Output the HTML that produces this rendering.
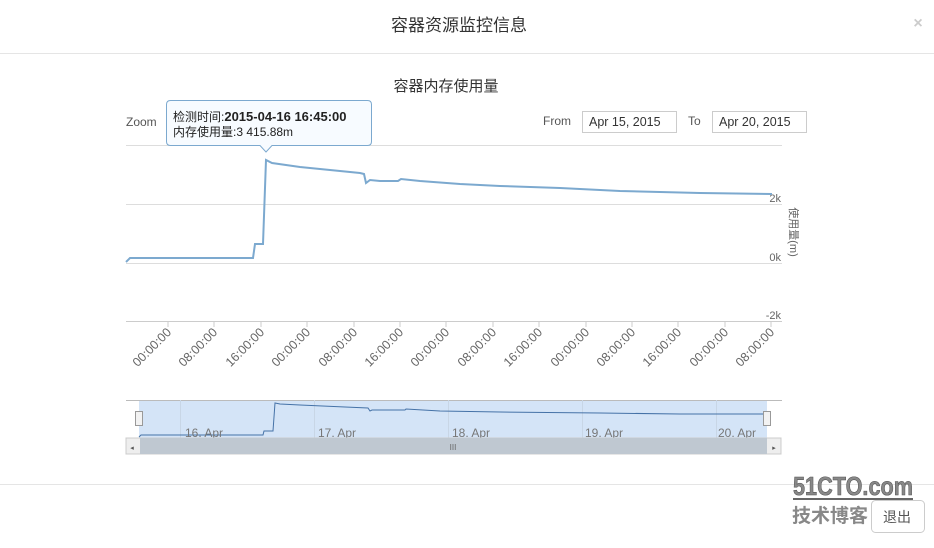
<!DOCTYPE html>
<html><head><meta charset="utf-8"><style>
body{margin:0;width:934px;height:543px;background:#fff;overflow:hidden;font-family:"Liberation Sans","Noto Sans CJK SC",sans-serif;}
svg text{font-family:"Liberation Sans","Noto Sans CJK SC",sans-serif;}
</style></head><body>
<svg width="934" height="543" viewBox="0 0 934 543" xmlns="http://www.w3.org/2000/svg">
<text x="459" y="31" font-size="17" text-anchor="middle" fill="#333">容器资源监控信息</text>
<text x="918" y="28" font-size="16" text-anchor="middle" fill="#ccc" font-weight="bold">×</text>
<line x1="0" y1="53.5" x2="934" y2="53.5" stroke="#e5e5e5"/>
<line x1="0" y1="484.5" x2="934" y2="484.5" stroke="#e5e5e5"/>
<text x="446" y="91" font-size="15" text-anchor="middle" fill="#333">容器内存使用量</text>
<text x="126" y="126" font-size="12" fill="#555">Zoom</text>
<text x="543" y="125" font-size="12" fill="#555">From</text>
<rect x="582.5" y="111.5" width="94" height="21" fill="#fff" stroke="#ccc"/>
<text x="589" y="126" font-size="12.5" fill="#333">Apr 15, 2015</text>
<text x="688" y="125" font-size="12" fill="#555">To</text>
<rect x="712.5" y="111.5" width="94" height="21" fill="#fff" stroke="#ccc"/>
<text x="719" y="126" font-size="12.5" fill="#333">Apr 20, 2015</text>
<g stroke="#ddd"><line x1="126" y1="145.5" x2="782" y2="145.5"/><line x1="126" y1="204.5" x2="782" y2="204.5"/><line x1="126" y1="263.5" x2="782" y2="263.5"/></g>
<line x1="126" y1="321.5" x2="782" y2="321.5" stroke="#ccc"/>
<g font-size="11" fill="#666" text-anchor="end"><text x="781" y="202">2k</text><text x="781" y="261">0k</text><text x="781" y="319">-2k</text></g>
<text transform="translate(790,232) rotate(90)" font-size="11" fill="#666" text-anchor="middle">使用量(m)</text>
<polyline fill="none" stroke="#7ca9cf" stroke-width="2" points="126,262 130,258 253,258 255,244 263,244 266,160 272,163 300,167 330,170 360,173 364,174 366,183 370,180 380,181 398,181 401,179 420,181 460,184 500,186 560,188 620,191 700,193 772,194"/>
<g stroke="#ccc">
<line x1="168" y1="322" x2="168" y2="327"/><line x1="214" y1="322" x2="214" y2="327"/><line x1="261" y1="322" x2="261" y2="327"/><line x1="307" y1="322" x2="307" y2="327"/><line x1="354" y1="322" x2="354" y2="327"/><line x1="400" y1="322" x2="400" y2="327"/><line x1="446" y1="322" x2="446" y2="327"/><line x1="493" y1="322" x2="493" y2="327"/><line x1="539" y1="322" x2="539" y2="327"/><line x1="586" y1="322" x2="586" y2="327"/><line x1="632" y1="322" x2="632" y2="327"/><line x1="678" y1="322" x2="678" y2="327"/><line x1="725" y1="322" x2="725" y2="327"/><line x1="771" y1="322" x2="771" y2="327"/>
</g>
<g font-size="12.5" fill="#666" text-anchor="end">
<text transform="translate(172,333) rotate(-45)">00:00:00</text>
<text transform="translate(218,333) rotate(-45)">08:00:00</text>
<text transform="translate(265,333) rotate(-45)">16:00:00</text>
<text transform="translate(311,333) rotate(-45)">00:00:00</text>
<text transform="translate(358,333) rotate(-45)">08:00:00</text>
<text transform="translate(404,333) rotate(-45)">16:00:00</text>
<text transform="translate(450,333) rotate(-45)">00:00:00</text>
<text transform="translate(497,333) rotate(-45)">08:00:00</text>
<text transform="translate(543,333) rotate(-45)">16:00:00</text>
<text transform="translate(590,333) rotate(-45)">00:00:00</text>
<text transform="translate(636,333) rotate(-45)">08:00:00</text>
<text transform="translate(682,333) rotate(-45)">16:00:00</text>
<text transform="translate(729,333) rotate(-45)">00:00:00</text>
<text transform="translate(775,333) rotate(-45)">08:00:00</text>
</g>
<!-- navigator -->
<rect x="126" y="400" width="654" height="38" fill="#fff"/>
<rect x="139" y="400" width="628" height="38" fill="#d4e4f7"/>
<line x1="126" y1="400.5" x2="782" y2="400.5" stroke="#bbb"/>
<g stroke="#c8d6e6"><line x1="180.5" y1="400" x2="180.5" y2="438"/><line x1="314.5" y1="400" x2="314.5" y2="438"/><line x1="448.5" y1="400" x2="448.5" y2="438"/><line x1="582.5" y1="400" x2="582.5" y2="438"/><line x1="716.5" y1="400" x2="716.5" y2="438"/></g>
<polyline fill="none" stroke="#4572a7" stroke-width="1" points="139,437 141,435 263,435 264,431 273,431 275,403 280,404 300,405 345,407 368,408 370,411 372,410 405,410 406,409 440,411 500,412 600,413 680,414 767,414"/>
<g font-size="12" fill="#777"><text x="185" y="437">16. Apr</text><text x="318" y="437">17. Apr</text><text x="452" y="437">18. Apr</text><text x="585" y="437">19. Apr</text><text x="718" y="437">20. Apr</text></g>
<rect x="135.5" y="411.5" width="7" height="14" fill="#f2f2f2" stroke="#999"/>
<rect x="763.5" y="411.5" width="7" height="14" fill="#f2f2f2" stroke="#999"/>
<rect x="126" y="438" width="655" height="16" fill="#eee" stroke="#ccc"/>
<rect x="140" y="438" width="627" height="16" fill="#bfc8d1"/>
<text x="453" y="450" font-size="8" fill="#666" text-anchor="middle">III</text>
<text x="132" y="450" font-size="7" fill="#555" text-anchor="middle">◂</text>
<text x="774" y="450" font-size="7" fill="#555" text-anchor="middle">▸</text>
<!-- tooltip -->
<path d="M170.5 100.5 H367.5 Q371.5 100.5 371.5 104.5 V141.5 Q371.5 145.5 367.5 145.5 H272 L266 152 L260 145.5 H170.5 Q166.5 145.5 166.5 141.5 V104.5 Q166.5 100.5 170.5 100.5 Z" fill="#f7fbff" stroke="#7ca9cf"/>
<text x="173" y="121" font-size="12" fill="#222">检测时间:<tspan font-weight="bold" font-size="13">2015-04-16 16:45:00</tspan></text>
<text x="173" y="136" font-size="12" fill="#222">内存使用量:3 415.88m</text>
<!-- watermark -->
<text x="793" y="495" font-size="26" font-weight="bold" fill="#888" stroke="#555" stroke-width="0.6" textLength="120" lengthAdjust="spacingAndGlyphs">51CTO.com</text>
<line x1="793" y1="499" x2="913" y2="499" stroke="#666" stroke-width="2"/>
<rect x="871.5" y="500.5" width="53" height="32" rx="4" fill="#fff" stroke="#ccc"/>
<text x="792" y="522" font-size="19" fill="#888" font-weight="bold">技术博客</text>
<text x="883" y="522" font-size="14" fill="#555">退出</text>
</svg>
</body></html>
